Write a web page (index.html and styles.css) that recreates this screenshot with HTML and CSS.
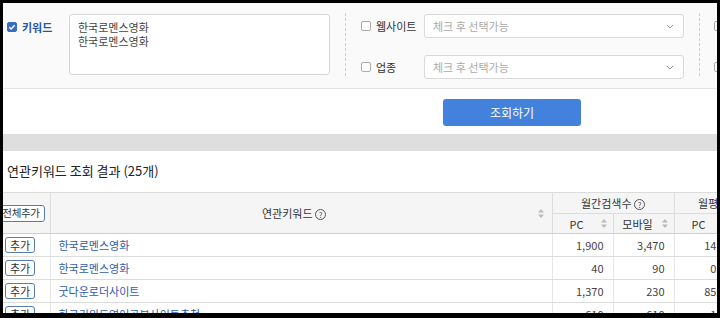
FILE: index.html
```html
<!DOCTYPE html>
<html>
<head>
    <meta charset="UTF-8">
    <meta name="viewport" content="width=device-width, initial-scale=1.0">
    <title>키워드 도구</title>
    <link rel="stylesheet" href="styles.css">
</head>
<body>
<div class="screen">
    <div class="filter">
        <div class="kw">
            <label class="chk kw-label">
                <span class="box checked"><svg width="8" height="8" viewBox="0 0 8 8"><path d="M1.3 4.2l1.8 1.8 3.6-3.8" stroke="#fff" stroke-width="1.5" fill="none"/></svg></span>키워드
            </label>
            <textarea class="kw-input" readonly>한국로멘스영화
한국로멘스영화</textarea>
        </div>
        <div class="sep"></div>
        <div class="opts">
            <div class="opt">
                <label class="chk"><span class="box"></span>웹사이트</label>
                <div class="select">체크 후 선택가능<svg class="chev" width="8" height="5" viewBox="0 0 8 5"><path d="M1 1l3 3 3-3" stroke="#999" fill="none"/></svg></div>
            </div>
            <div class="opt">
                <label class="chk"><span class="box"></span>업종</label>
                <div class="select">체크 후 선택가능<svg class="chev" width="8" height="5" viewBox="0 0 8 5"><path d="M1 1l3 3 3-3" stroke="#999" fill="none"/></svg></div>
            </div>
        </div>
        <div class="sep"></div>
        <div class="opts more">
            <div class="opt"><span class="box"></span></div>
            <div class="opt"><span class="box"></span></div>
        </div>
    </div>

    <div class="actions">
        <button class="btn">조회하기</button>
    </div>
    <div class="band"></div>

    <div class="result">
        <h3 class="result-title">연관키워드 조회 결과 (25개)</h3>
        <table class="grid">
            <colgroup>
                <col class="c-add"><col class="c-kw"><col class="c-num"><col class="c-num"><col class="c-num"><col class="c-num">
            </colgroup>
            <thead>
                <tr class="h1">
                    <th rowspan="2" class="add-all"><button class="mini wide">전체추가</button></th>
                    <th rowspan="2" class="kw-head">
                        <div class="hcell"><span class="hlabel">연관키워드 <span class="help">?</span></span><svg class="sort" width="6" height="9" viewBox="0 0 6 9"><path d="M3 0L6 3.5H0Z M3 9L0 5.5H6Z" fill="#bbb"/></svg></div>
                    </th>
                    <th colspan="2">월간검색수 <span class="help">?</span></th>
                    <th colspan="2">월평균클릭수 <span class="help">?</span></th>
                </tr>
                <tr class="h2">
                    <th><div class="hcell"><span class="hlabel">PC</span><svg class="sort" width="6" height="9" viewBox="0 0 6 9"><path d="M3 0L6 3.5H0Z M3 9L0 5.5H6Z" fill="#bbb"/></svg></div></th>
                    <th><div class="hcell"><span class="hlabel">모바일</span><svg class="sort" width="6" height="9" viewBox="0 0 6 9"><path d="M3 0L6 3.5H0Z M3 9L0 5.5H6Z" fill="#bbb"/></svg></div></th>
                    <th><div class="hcell"><span class="hlabel">PC</span><svg class="sort" width="6" height="9" viewBox="0 0 6 9"><path d="M3 0L6 3.5H0Z M3 9L0 5.5H6Z" fill="#bbb"/></svg></div></th>
                    <th><div class="hcell"><span class="hlabel">모바일</span><svg class="sort" width="6" height="9" viewBox="0 0 6 9"><path d="M3 0L6 3.5H0Z M3 9L0 5.5H6Z" fill="#bbb"/></svg></div></th>
                </tr>
            </thead>
            <tbody>
                <tr>
                    <td class="add"><button class="mini">추가</button></td>
                    <td class="kw-cell"><a href="#">한국로멘스영화</a></td>
                    <td class="num">1,900</td><td class="num">3,470</td><td class="num">14.3</td><td class="num">22.5</td>
                </tr>
                <tr>
                    <td class="add"><button class="mini">추가</button></td>
                    <td class="kw-cell"><a href="#">한국로멘스영화</a></td>
                    <td class="num">40</td><td class="num">90</td><td class="num">0.3</td><td class="num">1</td>
                </tr>
                <tr>
                    <td class="add"><button class="mini">추가</button></td>
                    <td class="kw-cell"><a href="#">굿다운로더사이트</a></td>
                    <td class="num">1,370</td><td class="num">230</td><td class="num">85.5</td><td class="num">6</td>
                </tr>
                <tr>
                    <td class="add"><button class="mini">추가</button></td>
                    <td class="kw-cell"><a href="#">한국키워드영어공부사이트추천</a></td>
                    <td class="num">610</td><td class="num">610</td><td class="num">1.5</td><td class="num">2</td>
                </tr>
            </tbody>
        </table>
    </div>
</div>
</body>
</html>
```

FILE: styles.css
```css
body {
    margin: 0;
    background-color: #000;
    font-family: "Noto Sans CJK KR", "Noto Sans", sans-serif;
    font-size: 11px;
    color: #333;
}

.screen {
    margin: 3px 0 0 3px;
    width: 714px;
    height: 310px;
    overflow: hidden;
    background-color: #fff;
}

/* 검색 조건 */
.filter {
    display: flex;
    height: 86px;
    box-sizing: border-box;
    padding: 11px 0 0 4px;
    background-color: #fafafa;
    border-bottom: 1px solid #e4e4e4;
}

.kw {
    display: flex;
    align-items: flex-start;
}

.chk {
    display: flex;
    align-items: center;
    line-height: 14px;
    white-space: nowrap;
}

.box {
    display: inline-flex;
    align-items: center;
    justify-content: center;
    width: 10px;
    height: 10px;
    box-sizing: border-box;
    border: 1px solid #aaa;
    border-radius: 2px;
    background-color: #fff;
    margin-right: 5px;
    flex-shrink: 0;
}

.box.checked {
    border-color: #3a6cc2;
    background-color: #3a6cc2;
}

.kw-label {
    width: 62px;
    margin-top: 6px;
    font-weight: bold;
    color: #2a579e;
}

.kw-input {
    width: 261px;
    height: 61px;
    box-sizing: border-box;
    margin: 0 15px 0 0;
    padding: 5px 8px;
    border: 1px solid #d6d6d6;
    border-radius: 3px;
    background-color: #fff;
    font-family: inherit;
    font-size: 11px;
    line-height: 14px;
    color: #444;
    resize: none;
    overflow: hidden;
}

.sep {
    width: 0;
    height: 63px;
    margin-top: -1px;
    border-left: 1px dashed #cfcfcf;
}

.opts {
    display: flex;
    flex-direction: column;
    gap: 17px;
    padding: 0 15px;
}

.opt {
    display: flex;
    align-items: center;
    height: 24px;
}

.opt .chk {
    width: 63px;
}

.select {
    display: flex;
    align-items: center;
    justify-content: space-between;
    width: 260px;
    height: 24px;
    box-sizing: border-box;
    padding: 0 9px 0 8px;
    border: 1px solid #d9d9d9;
    border-radius: 3px;
    background-color: #fff;
    color: #aaa;
}

.more {
    padding-left: 14px;
}

/* 조회 버튼 */
.actions {
    height: 45px;
    box-sizing: border-box;
    padding: 10px 0 8px 440px;
}

.btn {
    width: 138px;
    height: 27px;
    border: none;
    border-radius: 3px;
    background-color: #4282dc;
    color: #fff;
    font-family: inherit;
    font-size: 12px;
    cursor: pointer;
}

.band {
    height: 17px;
    background-color: #dedede;
}

/* 결과 */
.result-title {
    margin: 11px 0 12px 4px;
    font-size: 13px;
    font-weight: normal;
    line-height: 18px;
    color: #222;
}

.grid {
    margin-left: -6px;
    border-collapse: collapse;
    table-layout: fixed;
    width: 788px;
}

.c-add { width: 53px; }
.c-kw { width: 502px; }
.c-num { width: 61px; }

.grid th {
    background-color: #f5f5f5;
    border: 1px solid #dcdcdc;
    font-weight: normal;
    color: #333;
    padding: 0;
    white-space: nowrap;
}

.grid tr.h1 th { height: 20px; }
.grid tr.h2 th { height: 19px; }

.grid thead tr.h2 th,
.grid thead th[rowspan] {
    border-bottom-color: #cfcfcf;
}

.grid th.add-all {
    text-align: left;
    padding-left: 0;
    border-left: none;
}

.hcell {
    display: flex;
    align-items: center;
    padding-right: 6px;
}

.hlabel {
    flex: 1;
    text-align: center;
}

.kw-head .hcell {
    padding-right: 8px;
}

.help {
    display: inline-block;
    width: 9px;
    height: 9px;
    border: 1px solid #555;
    border-radius: 50%;
    font-size: 8px;
    line-height: 9px;
    text-align: center;
    vertical-align: 0;
    color: #555;
}

.grid td {
    height: 22px;
    padding: 0;
    border-bottom: 1px solid #dcdcdc;
    border-left: 1px solid #e6e6e6;
    white-space: nowrap;
    overflow: hidden;
}

.grid td.add {
    border-left: none;
    padding-left: 8px;
}

.mini {
    width: 30px;
    height: 16px;
    padding: 0;
    border: 1px solid #5a7db0;
    border-radius: 3px;
    background-color: #fff;
    font-family: inherit;
    font-size: 11px;
    line-height: 14px;
    color: #333;
    display: block;
}

.mini.wide {
    width: 48px;
    height: 17px;
    font-size: 10.5px;
    letter-spacing: -0.3px;
}

.kw-cell {
    padding-left: 8px !important;
}

.kw-cell a {
    color: #2f5cae;
    text-decoration: none;
}

.num {
    text-align: right;
    padding-right: 9px !important;
    color: #444;
}
```
